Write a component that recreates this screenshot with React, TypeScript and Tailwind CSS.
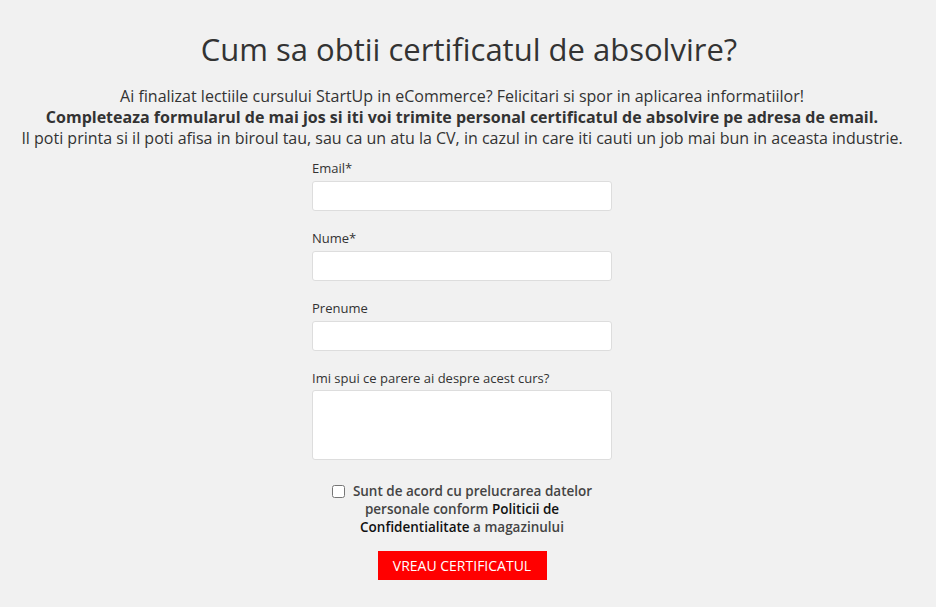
import React from 'react';

const font = { fontFamily: '"Open Sans", "Liberation Sans", sans-serif' };

function Field({ label, tall = false }: { label: string; tall?: boolean }) {
  return (
    <div className="flex flex-col">
      <label className={tall ? 'text-[13px] leading-[18px] text-[#333] mb-[3px]' : 'text-[13px] leading-[18px] text-[#333] mb-[4px]'}>
        {label}
      </label>
      {tall ? (
        <textarea className="w-[300px] h-[70px] bg-white border border-[#ddd] rounded-[3px] resize-none outline-none" />
      ) : (
        <input className="w-[300px] h-[30px] bg-white border border-[#ddd] rounded-[3px] outline-none" />
      )}
    </div>
  );
}

export default function App() {
  return (
    <div className="min-h-[607px] bg-[#f1f1f1] text-[#333]" style={font}>
      <div className="flex flex-col items-center pt-[29px] pr-[12px]">
        <h1 className="pl-[14px] text-[31px] leading-[40px] font-normal text-[#333]">
          Cum sa obtii certificatul de absolvire?
        </h1>
        <div className="mt-[17px] text-center text-[16px] leading-[21px] text-[#333]">
          <p>Ai finalizat lectiile cursului StartUp in eCommerce? Felicitari si spor in aplicarea informatiilor!</p>
          <p className="font-bold">
            Completeaza formularul de mai jos si iti voi trimite personal certificatul de absolvire pe adresa de email.
          </p>
          <p>Il poti printa si il poti afisa in biroul tau, sau ca un atu la CV, in cazul in care iti cauti un job mai bun in aceasta industrie.</p>
        </div>

        <form className="mt-[10px] flex flex-col gap-[18px]">
          <Field label="Email*" />
          <Field label="Nume*" />
          <Field label="Prenume" />
          <Field label="Imi spui ce parere ai despre acest curs?" tall />
        </form>

        <p className="mt-[22px] w-[275px] text-center text-[13.5px] leading-[18px] font-semibold text-[#444]">
          <input type="checkbox" className="mr-[8px] w-[13px] h-[13px] align-[-2px]" />
          Sunt de acord cu prelucrarea datelor personale conform{' '}
          <span className="text-[#111]">Politicii de Confidentialitate</span> a magazinului
        </p>

        <button className="mt-[15px] bg-[#ff0000] text-white text-[14px] uppercase h-[29px] w-[169px]">
          Vreau certificatul
        </button>
      </div>
    </div>
  );
}
